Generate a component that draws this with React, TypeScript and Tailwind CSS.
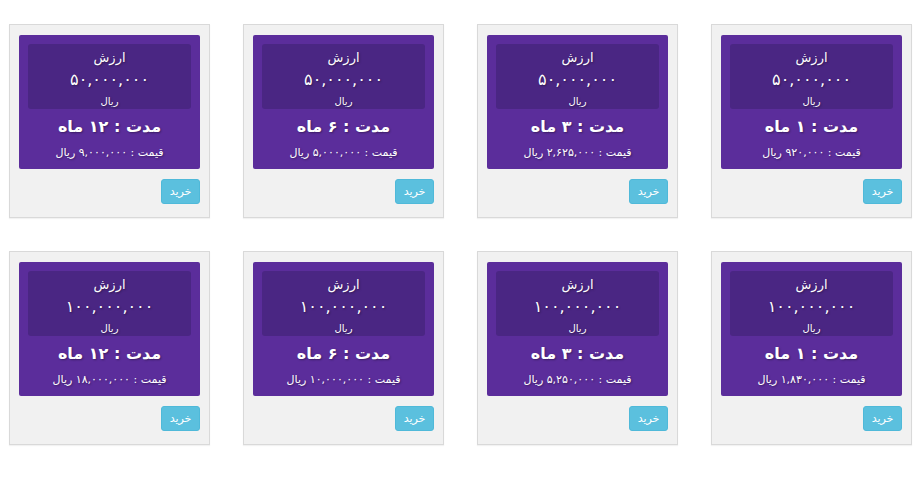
import React from "react";

type Plan = { value: string; months: string; price: string };

const rows: Plan[][] = [
  [
    { value: "۵۰,۰۰۰,۰۰۰", months: "۱", price: "۹۲۰,۰۰۰" },
    { value: "۵۰,۰۰۰,۰۰۰", months: "۳", price: "۲,۶۲۵,۰۰۰" },
    { value: "۵۰,۰۰۰,۰۰۰", months: "۶", price: "۵,۰۰۰,۰۰۰" },
    { value: "۵۰,۰۰۰,۰۰۰", months: "۱۲", price: "۹,۰۰۰,۰۰۰" },
  ],
  [
    { value: "۱۰۰,۰۰۰,۰۰۰", months: "۱", price: "۱,۸۳۰,۰۰۰" },
    { value: "۱۰۰,۰۰۰,۰۰۰", months: "۳", price: "۵,۲۵۰,۰۰۰" },
    { value: "۱۰۰,۰۰۰,۰۰۰", months: "۶", price: "۱۰,۰۰۰,۰۰۰" },
    { value: "۱۰۰,۰۰۰,۰۰۰", months: "۱۲", price: "۱۸,۰۰۰,۰۰۰" },
  ],
];

function Card({ p }: { p: Plan }) {
  return (
    <div className="w-[201px] h-[194px] border border-[#d9d9d9] bg-[#f1f1f1] px-[9px] pt-[10px] shadow-[0_1px_1px_rgba(0,0,0,0.05)]">
      <div className="h-[134px] bg-[#5b2d9b] rounded-[2px] px-[9px] pt-[9px] text-white text-center [text-shadow:1px_1px_2px_rgba(0,0,0,0.35)]">
        <div className="h-[65px] bg-[#4a2683] rounded-[3px] pt-[4px] flex flex-col items-center">
          <div className="text-[13px] leading-[20px]">ارزش</div>
          <div className="text-[16px] leading-[24px] tracking-[0.5px]" dir="ltr">{p.value}</div>
          <div className="text-[10px] leading-[14px] mt-[3px]">ریال</div>
        </div>
        <div className="mt-[6px] text-[16px] leading-[24px] font-bold">مدت : {p.months} ماه</div>
        <div className="mt-[6px] text-[11px] leading-[16px]">قیمت : {p.price} ریال</div>
      </div>
      <div className="mt-[10px] flex">
        <button className="w-[39px] h-[25px] rounded-[3px] bg-[#5bc0de] border border-[#4fb9d9] text-white text-[11px] leading-none">
          خرید
        </button>
      </div>
    </div>
  );
}

export default function App() {
  return (
    <div
      dir="rtl"
      className="w-[922px] h-[480px] bg-white pt-[24px] pr-[10px] flex flex-col gap-[33px] font-['DejaVu_Sans',sans-serif]"
    >
      {rows.map((r, i) => (
        <div key={i} className="flex gap-[33px]">
          {r.map((p, j) => (
            <Card key={j} p={p} />
          ))}
        </div>
      ))}
    </div>
  );
}
